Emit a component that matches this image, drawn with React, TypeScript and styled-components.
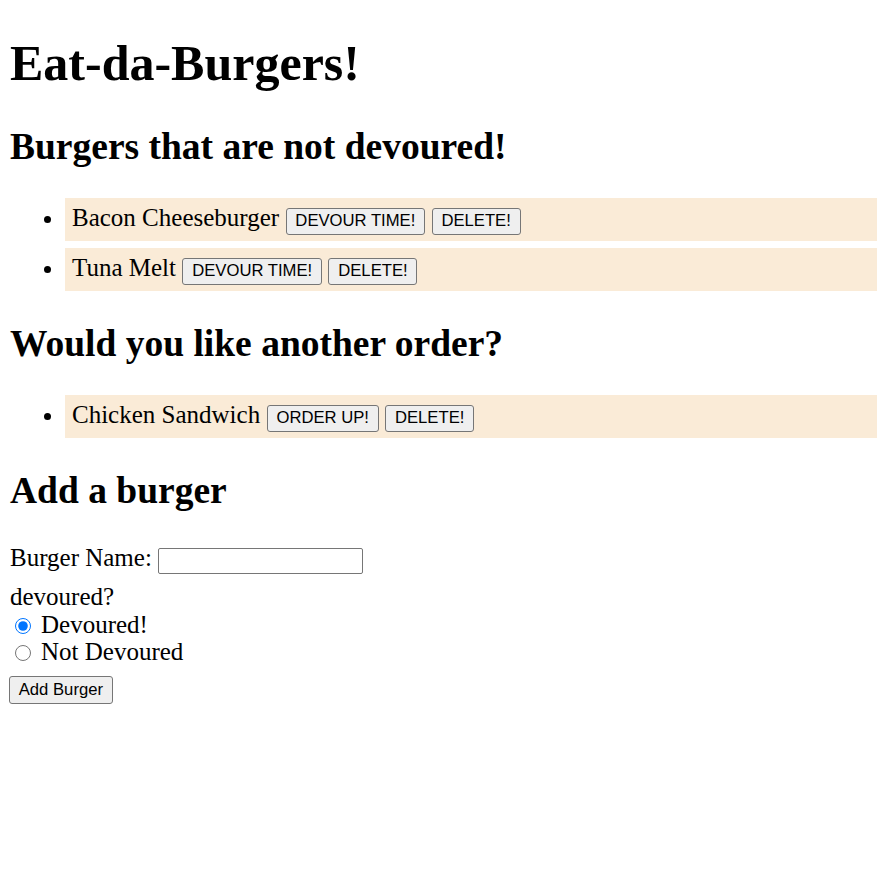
import React from 'react';
import styled, { createGlobalStyle } from 'styled-components';

const GlobalStyle = createGlobalStyle`
  html, body {
    margin: 0;
    padding: 0;
    background: #ffffff;
  }
  body {
    padding: 0 10px;
    font-family: 'Liberation Serif', 'Times New Roman', serif;
    font-size: 25px;
    color: #000000;
  }
`;

const Page = styled.div`
  display: flow-root;
`;

const Title = styled.h1`
  font-size: 50px;
  font-weight: bold;
  margin: 33.5px 0;
`;

const SectionTitle = styled.h2`
  font-size: 37.5px;
  font-weight: bold;
  margin: 31px 0 29.5px;
`;

const BurgerList = styled.ul`
  list-style: disc;
  margin: 0 -10px 31px 0;
  padding-left: 55px;
`;

const BurgerItem = styled.li`
  background: #faebd7;
  padding: 6.5px 7px;
  margin: 0 0 6.5px 0;
`;

const ActionButton = styled.button`
  font-family: 'Liberation Sans', Arial, sans-serif;
  font-size: 16.67px;
  color: #000000;
  background: #efefef;
  border: 1px solid #767676;
  border-radius: 3px;
  padding: 2.5px 8.75px;
  margin: 0 0 0 6.5px;
  vertical-align: baseline;
  line-height: normal;
`;

const BurgerForm = styled.form`
  margin: 0;
  padding-top: 2px;
`;

const NameRow = styled.div`
  line-height: normal;
  margin-bottom: 9px;
`;

const FieldRow = styled.div`
  line-height: normal;
`;

const NameInput = styled.input`
  width: 205px;
  height: 26px;
  box-sizing: border-box;
  border: 1px solid #767676;
  border-radius: 2px;
  padding: 1px 2px;
  margin: 0;
  vertical-align: baseline;
  font-size: 16.67px;
`;

const RadioRow = styled.label`
  display: block;
  line-height: 27.7px;
`;

const Radio = styled.input`
  width: 16px;
  height: 16px;
  margin: 0 10px 0 5px;
  vertical-align: -1px;
  accent-color: #0075ff;
`;

const SubmitButton = styled(ActionButton)`
  margin: 10px 0 0 -1px;
  padding: 3px 8.75px;
`;

type Burger = { id: number; name: string };

const notDevoured: Burger[] = [
  { id: 1, name: 'Bacon Cheeseburger' },
  { id: 2, name: 'Tuna Melt' },
];

const devoured: Burger[] = [{ id: 3, name: 'Chicken Sandwich' }];

export default function App() {
  return (
    <Page>
      <GlobalStyle />
      <Title>Eat-da-Burgers!</Title>

      <SectionTitle>Burgers that are not devoured!</SectionTitle>
      <BurgerList>
        {notDevoured.map(b => (
          <BurgerItem key={b.id}>
            {b.name}
            <ActionButton type="button">DEVOUR TIME!</ActionButton>
            <ActionButton type="button">DELETE!</ActionButton>
          </BurgerItem>
        ))}
      </BurgerList>

      <SectionTitle>Would you like another order?</SectionTitle>
      <BurgerList>
        {devoured.map(b => (
          <BurgerItem key={b.id}>
            {b.name}
            <ActionButton type="button">ORDER UP!</ActionButton>
            <ActionButton type="button">DELETE!</ActionButton>
          </BurgerItem>
        ))}
      </BurgerList>

      <SectionTitle>Add a burger</SectionTitle>
      <BurgerForm onSubmit={e => e.preventDefault()}>
        <NameRow>
          Burger Name: <NameInput type="text" name="burger_name" />
        </NameRow>
        <FieldRow>devoured?</FieldRow>
        <RadioRow>
          <Radio type="radio" name="devoured" value="1" defaultChecked />
          Devoured!
        </RadioRow>
        <RadioRow>
          <Radio type="radio" name="devoured" value="0" />
          Not Devoured
        </RadioRow>
        <SubmitButton type="submit">Add Burger</SubmitButton>
      </BurgerForm>
    </Page>
  );
}
